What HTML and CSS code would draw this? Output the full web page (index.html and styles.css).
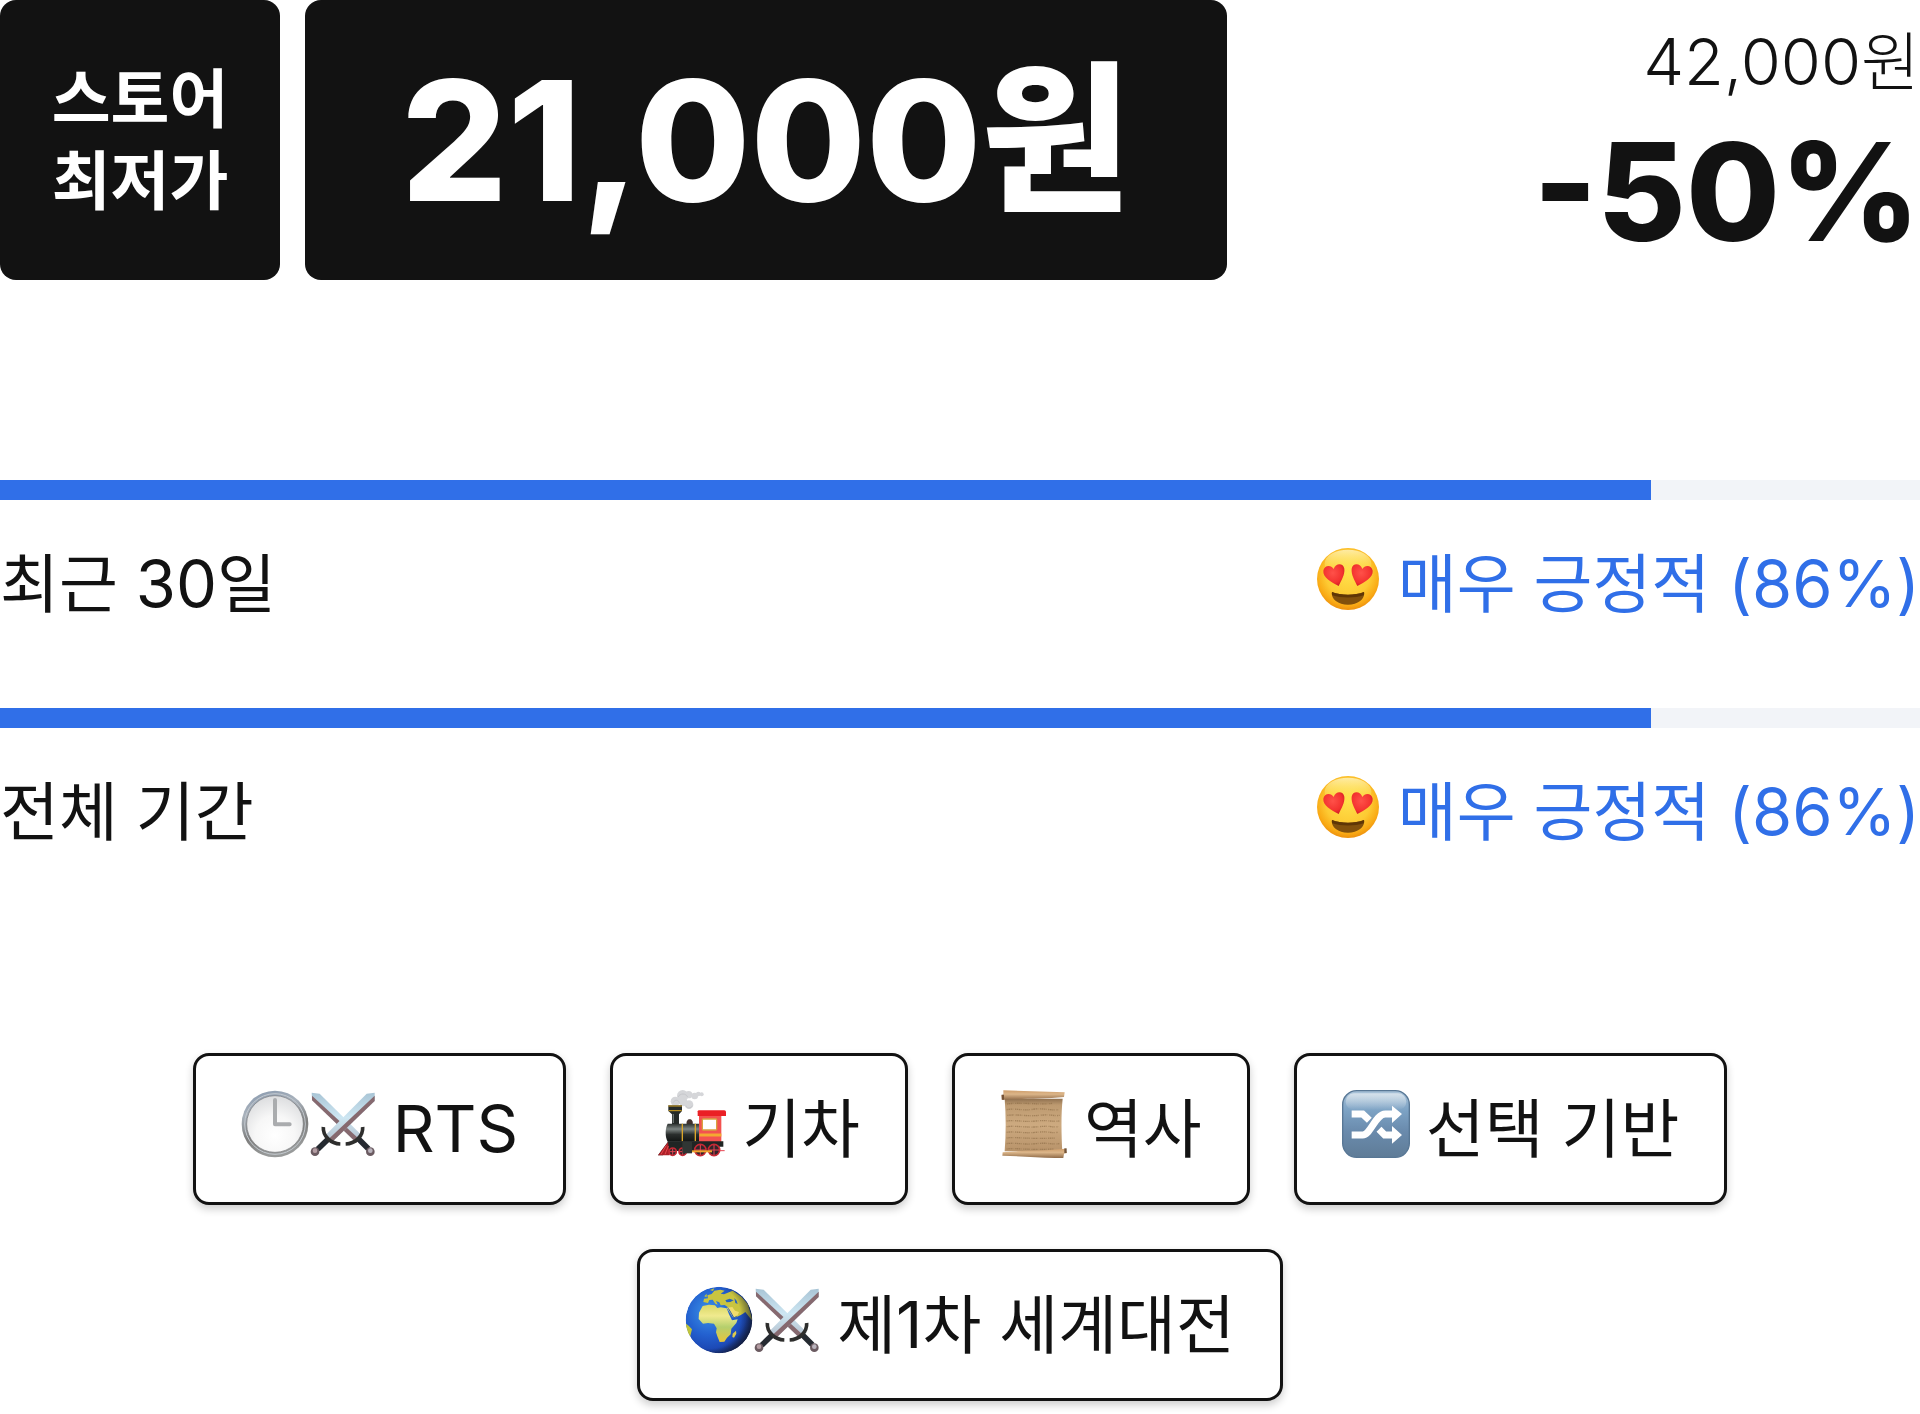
FILE: index.html
```html
<!DOCTYPE html>
<html lang="ko">

<head>
    <meta charset="UTF-8">
    <meta name="viewport" content="width=device-width, initial-scale=1.0">
    <title>스토어 최저가</title>
    <link rel="stylesheet" href="styles.css">
</head>

<body>
    <!-- shared icons -->
    <svg class="defs" width="0" height="0" aria-hidden="true">
        <defs>
            <radialGradient id="faceFill" cx="0.5" cy="0.42" r="0.6">
                <stop offset="0" stop-color="#ffe04a" />
                <stop offset="0.6" stop-color="#fdca33" />
                <stop offset="0.85" stop-color="#f9a914" />
                <stop offset="1" stop-color="#ea8a0c" />
            </radialGradient>
            <linearGradient id="faceShine" x1="0" y1="0" x2="0" y2="1">
                <stop offset="0" stop-color="#fffbd8" stop-opacity="0.7" />
                <stop offset="1" stop-color="#ffee3c" stop-opacity="0" />
            </linearGradient>
            <radialGradient id="heartFill" cx="0.45" cy="0.4" r="0.65">
                <stop offset="0" stop-color="#ff5149" />
                <stop offset="0.7" stop-color="#f3322f" />
                <stop offset="1" stop-color="#cf1b25" />
            </radialGradient>
            <linearGradient id="bladeFill" x1="0" y1="0" x2="0" y2="1">
                <stop offset="0" stop-color="#a9c5d6" />
                <stop offset="0.5" stop-color="#cde6f2" />
                <stop offset="1" stop-color="#b4bfcc" />
            </linearGradient>
            <symbol id="heartEyes" viewBox="26 30 204 204">
                <circle cx="128" cy="132" r="93" fill="url(#faceFill)" />
                <ellipse cx="128" cy="86" rx="70" ry="42" fill="url(#faceShine)" />
                <path d="M100 153C78 141 52 128 54 107C56 91 77 88 85 102C90 84 114 83 117 101C119 119 108 136 100 153Z" fill="url(#heartFill)" />
                <path d="M156 153C178 141 204 128 202 107C200 91 179 88 171 102C166 84 142 83 139 101C137 119 148 136 156 153Z" fill="url(#heartFill)" />
                <path d="M80 171C108 182 148 182 176 171C180 193 157 209 128 209C99 209 76 193 80 171Z" fill="#81500c" />
                <path d="M80 171C108 182 148 182 176 171C177 175 177 178 175 181C148 190 108 190 81 181C79 178 79 175 80 171Z" fill="#5f3606" />
            </symbol>
            <symbol id="swords" viewBox="382 149 204 204">
                <path d="M390 157L414 160L543 288L524 307L391 179Z" fill="url(#bladeFill)" />
                <path d="M391 166L533 297L524 307L391 180Z" fill="#86696f" />
                <path d="M530 295L560 325" stroke="#252a31" stroke-width="17" />
                <path d="M543 260C545 288 520 310 492 311" fill="none" stroke="#2e2e2d" stroke-width="11" />
                <path d="M579 157L555 160L429 287L449 307L579 182Z" fill="url(#bladeFill)" />
                <path d="M579 166L440 297L449 307L579 182Z" fill="#86696f" />
                <path d="M439 297L408 327" stroke="#252a31" stroke-width="17" />
                <path d="M425 260C423 288 448 310 476 311" fill="none" stroke="#2e2e2d" stroke-width="11" />
                <circle cx="400" cy="334" r="13" fill="#6b5b61" />
                <circle cx="400" cy="331" r="7" fill="#b49da3" />
                <circle cx="566" cy="334" r="13" fill="#6b5b61" />
                <circle cx="566" cy="331" r="7" fill="#b9b3bc" />
            </symbol>
        </defs>
    </svg>

    <section class="price">
        <div class="price-label">스토어<br>최저가</div>
        <div class="price-now"><span class="price-num">21,000</span>원</div>
        <div class="price-sale">
            <div class="price-before"><span class="num">42,000</span>원</div>
            <div class="price-rate">-50%</div>
        </div>
    </section>

    <section class="reviews">
        <div class="review">
            <div class="bar">
                <div class="bar-fill" style="width: 86%;"></div>
            </div>
            <div class="review-text">
                <span>최근 <span class="num">30</span>일</span>
                <span class="review-score">
                    <svg class="emoji" aria-hidden="true"><use href="#heartEyes" /></svg>
                    <span>매우 긍정적 <span class="num">(86%)</span></span>
                </span>
            </div>
        </div>
        <div class="review">
            <div class="bar">
                <div class="bar-fill" style="width: 86%;"></div>
            </div>
            <div class="review-text">
                <span>전체 기간</span>
                <span class="review-score">
                    <svg class="emoji" aria-hidden="true"><use href="#heartEyes" /></svg>
                    <span>매우 긍정적 <span class="num">(86%)</span></span>
                </span>
            </div>
        </div>
    </section>

    <section class="tags">
        <button class="tag" type="button">
            <span class="icons">
                <!-- clock -->
                <svg class="emoji" viewBox="178 149 204 204" aria-hidden="true">
                    <defs>
                        <linearGradient id="clockRim" x1="0" y1="0" x2="0.3" y2="1">
                            <stop offset="0" stop-color="#8496ad" />
                            <stop offset="0.35" stop-color="#a9b2bc" />
                            <stop offset="0.7" stop-color="#7e7e7d" />
                            <stop offset="1" stop-color="#989a9a" />
                        </linearGradient>
                        <radialGradient id="clockFace" cx="0.5" cy="0.7" r="0.7">
                            <stop offset="0" stop-color="#ffffff" />
                            <stop offset="0.5" stop-color="#f7f7f7" />
                            <stop offset="1" stop-color="#dcdddf" />
                        </radialGradient>
                    </defs>
                    <circle cx="280" cy="251" r="100" fill="url(#clockRim)" />
                    <circle cx="280" cy="251" r="91" fill="none" stroke="#c3c9cf" stroke-width="3" />
                    <circle cx="280" cy="251" r="85" fill="url(#clockFace)" stroke="#77797b" stroke-width="2" />
                    <path d="M280 179V252H324" fill="none" stroke="#aaacae" stroke-width="12" stroke-linecap="round" stroke-linejoin="round" />
                </svg>
                <svg class="emoji" aria-hidden="true"><use href="#swords" /></svg>
            </span>
            <span class="num">RTS</span>
        </button>
        <button class="tag" type="button">
            <!-- steam train -->
            <svg class="emoji" viewBox="172 149 204 204" aria-hidden="true">
                <defs>
                    <linearGradient id="boiler" x1="0" y1="0" x2="0" y2="1">
                        <stop offset="0" stop-color="#2b302e" />
                        <stop offset="0.3" stop-color="#7d8583" />
                        <stop offset="0.6" stop-color="#2a2e2d" />
                        <stop offset="1" stop-color="#111413" />
                    </linearGradient>
                </defs>
                <g fill="#d5d6d9">
                    <circle cx="224" cy="183" r="14" />
                    <circle cx="246" cy="166" r="17" />
                    <circle cx="264" cy="163" r="11" />
                    <circle cx="265" cy="193" r="13" />
                    <circle cx="248" cy="186" r="12" />
                    <circle cx="282" cy="167" r="10" />
                    <circle cx="293" cy="161" r="7" />
                    <circle cx="303" cy="162" r="6" />
                </g>
                <path d="M232 170C238 158 256 158 261 170M217 187C224 176 234 178 237 190M256 196C260 206 271 204 275 196" fill="none" stroke="#c6c7cb" stroke-width="3" />
                <path d="M203 195H244V212L235 222V252H214V222L203 212Z" fill="#252a28" />
                <path d="M203 197H244M204 211H243" stroke="#d5a321" stroke-width="3" />
                <path d="M218 221V248" stroke="#6d7472" stroke-width="4" />
                <path d="M258 252C256 243 261 237 267 237C273 237 278 243 276 252Z" fill="#43312d" />
                <path d="M201 250H298V304H201C193 290 193 264 201 250Z" fill="url(#boiler)" />
                <path d="M245 250V303M284 250V303" stroke="#dca72b" stroke-width="4" />
                <rect x="295" y="223" width="67" height="82" fill="#f35250" />
                <path d="M291 213Q291 210 296 210H371Q376 210 376 215V227H291Z" fill="#ea2025" />
                <path d="M296 284H362" stroke="#f3a931" stroke-width="9" />
                <rect x="305" y="236" width="43" height="33" rx="3" fill="#fff" stroke="#d8a340" stroke-width="4" />
                <path d="M203 303H368V319H351L340 332H198L187 345H172Z" fill="#202524" />
                <path d="M202 305L172 345H207Z" fill="#ab2027" />
                <path d="M197 315L181 342M203 317L193 342" stroke="#e7464c" stroke-width="3" />
                <g fill="#33252a" stroke="#c82834" stroke-width="5">
                    <circle cx="216" cy="334" r="11" />
                    <circle cx="246" cy="334" r="11" />
                    <circle cx="299" cy="329" r="17" />
                    <circle cx="340" cy="329" r="17" />
                </g>
                <path d="M216 325V343M207 334H225M246 325V343M237 334H255M299 314V344M284 329H314M340 314V344M325 329H355M357 331H372" stroke="#e54552" stroke-width="3" />
                <rect x="245" y="305" width="29" height="34" fill="#303634" />
                <path d="M274 333H334" stroke="#f0a62d" stroke-width="6" />
            </svg>
            <span>기차</span>
        </button>
        <button class="tag" type="button">
            <!-- scroll -->
            <svg class="emoji" viewBox="182 149 204 204" aria-hidden="true">
                <defs>
                    <linearGradient id="paper" x1="0" y1="0" x2="0" y2="1">
                        <stop offset="0" stop-color="#8f704f" />
                        <stop offset="0.12" stop-color="#bd9a70" />
                        <stop offset="0.5" stop-color="#cdaa80" />
                        <stop offset="1" stop-color="#b8936a" />
                    </linearGradient>
                    <linearGradient id="roll" x1="0" y1="0" x2="0" y2="1">
                        <stop offset="0" stop-color="#cf9e6b" />
                        <stop offset="0.4" stop-color="#dbb589" />
                        <stop offset="1" stop-color="#8f6a48" />
                    </linearGradient>
                </defs>
                <path d="M196 175H370C365 220 366 285 369 333H196C200 280 200 225 196 175Z" fill="url(#paper)" />
                <path d="M203 191C240 185 300 194 340 189M202 208C230 203 250 212 280 207S330 211 357 208M204 225C240 221 260 229 300 225S340 228 361 225M202 242C230 238 250 246 290 242S330 245 360 242M202 259C230 255 260 263 300 259S330 262 357 259M202 276C230 272 250 280 290 276S330 279 355 276M202 293C230 289 260 297 350 293M202 310C230 306 250 314 290 310S330 313 360 310M202 326C230 322 260 330 342 326" fill="none" stroke="#8c6c46" stroke-opacity="0.6" stroke-width="4" stroke-dasharray="3 2 5 2 4 2 2 5" />
                <path d="M192 150L376 156L374 170C310 177 240 174 189 179L186 164H192Z" fill="url(#roll)" />
                <path d="M187 163H194V178H187Z" fill="#765337" />
                <path d="M190 336C240 330 310 332 378 325L383 338L374 340L372 353C310 354 250 347 189 346Z" fill="url(#roll)" />
                <path d="M375 324H382V338H375Z" fill="#72543a" />
            </svg>
            <span>역사</span>
        </button>
        <button class="tag" type="button">
            <!-- shuffle -->
            <svg class="emoji" viewBox="190 149 204 204" aria-hidden="true">
                <defs>
                    <linearGradient id="tile" x1="0" y1="0" x2="0" y2="1">
                        <stop offset="0" stop-color="#a9c2d8" />
                        <stop offset="0.3" stop-color="#7ca2c4" />
                        <stop offset="0.6" stop-color="#6a8bad" />
                        <stop offset="1" stop-color="#5f7c97" />
                    </linearGradient>
                    <linearGradient id="tileShine" x1="0" y1="0" x2="0" y2="1">
                        <stop offset="0" stop-color="#e3ebf1" stop-opacity="0.8" />
                        <stop offset="1" stop-color="#e3ebf1" stop-opacity="0" />
                    </linearGradient>
                </defs>
                <rect x="192" y="151" width="200" height="200" rx="42" fill="url(#tile)" stroke="#587795" stroke-width="4" />
                <rect x="201" y="159" width="182" height="50" rx="25" fill="url(#tileShine)" />
                <path d="M219 221H252L272 240M219 284H252C276 284 290 221 320 221H344M301 267L318 284H344" fill="none" stroke="#fff" stroke-width="21" />
                <path d="M340 196L370 221L340 248ZM340 257L370 284L340 310Z" fill="#fff" />
            </svg>
            <span>선택 기반</span>
        </button>
        <button class="tag" type="button">
            <span class="icons">
                <!-- globe -->
                <svg class="emoji" viewBox="0 0 204 204" aria-hidden="true">
                    <defs>
                        <radialGradient id="ocean" cx="0.35" cy="0.38" r="0.7">
                            <stop offset="0" stop-color="#3b93e8" />
                            <stop offset="0.5" stop-color="#2360cf" />
                            <stop offset="0.8" stop-color="#1c48b4" />
                            <stop offset="1" stop-color="#162255" />
                        </radialGradient>
                        <linearGradient id="land" x1="0" y1="0" x2="0" y2="1">
                            <stop offset="0" stop-color="#d9d766" />
                            <stop offset="0.3" stop-color="#f0ea8e" />
                            <stop offset="0.6" stop-color="#b5cf6d" />
                            <stop offset="1" stop-color="#e7c43c" />
                        </linearGradient>
                        <radialGradient id="globeShade" cx="0.35" cy="0.45" r="0.68">
                            <stop offset="0.7" stop-color="#101a30" stop-opacity="0" />
                            <stop offset="1" stop-color="#101a30" stop-opacity="0.75" />
                        </radialGradient>
                        <clipPath id="globeClip"><circle cx="102" cy="102" r="100" /></clipPath>
                    </defs>
                    <g clip-path="url(#globeClip)">
                        <circle cx="102" cy="102" r="100" fill="url(#ocean)" />
                        <path d="M53 60L72 56L90 58L97 66L107 64L125 67L132 85L141 103L158 100L154 111L139 128L137 145L126 155L118 167L104 168L97 151L93 139L95 127L87 113L69 111L54 113L41 99L42 80Z" fill="url(#land)" />
                        <path d="M143 143L153 134L154 143L147 155L142 153Z" fill="#dfca4b" />
                        <path d="M55 48L57 38L69 37L67 28L80 24L88 14L106 11L119 14L107 23L117 25L143 14L169 32L188 54L198 86L202 104L191 91L181 78L174 83L166 88L150 95L139 81L129 64L119 57L107 58L103 49L93 45L98 56L91 53L83 41L73 42L69 51Z" fill="#c9c43f" />
                        <path d="M125 65L142 63L150 74L162 78L158 88L145 96Z" fill="#f0dc6c" />
                        <path d="M121 43L134 38L146 43L136 48L125 49ZM148 36L155 44L158 54L151 51Z" fill="#2863bd" />
                        <path d="M130 67L147 96L155 91" fill="none" stroke="#295ba9" stroke-width="3" />
                        <path d="M58 31L65 23L65 34ZM75 12L88 7L84 15ZM0 111L11 119L21 130L16 149L9 164L0 150Z" fill="#bfc43a" />
                        <circle cx="102" cy="102" r="100" fill="url(#globeShade)" />
                    </g>
                </svg>
                <svg class="emoji" aria-hidden="true"><use href="#swords" /></svg>
            </span>
            <span>제<span class="num">1</span>차 세계대전</span>
        </button>
    </section>
</body>

</html>
```
FILE: styles.css
```css
* {
    box-sizing: border-box;
}

body {
    margin: 0;
    background-color: #fff;
    color: #121212;
    font-family: Inter, "Noto Sans CJK KR", sans-serif;
    font-size: 64px;
    line-height: 84px;
}

.defs {
    position: absolute;
}

/* latin letters and digits run a little larger than hangul */
.num {
    font-size: 65px;
}

.emoji {
    display: block;
    flex: none;
    width: 68px;
    height: 68px;
    margin-top: 3px;
}

.price {
    display: flex;
    gap: 25px;
    margin-bottom: 200px;
}

.price-label,
.price-now {
    display: flex;
    align-items: center;
    justify-content: center;
    height: 280px;
    border-radius: 16px;
    background-color: #121212;
    color: #fff;
}

.price-label {
    width: 280px;
    line-height: 82px;
    font-weight: 700;
}

.price-now {
    padding: 0 96px;
    font-size: 162px;
    font-weight: 800;
    line-height: 200px;
}

.price-num {
    font-size: 167px;
}

.price-sale {
    display: flex;
    flex-direction: column;
    gap: 8px;
    margin-left: auto;
    padding-top: 20px;
    text-align: right;
}

.price-before {
    font-weight: 300;
}

.price-rate {
    font-size: 136px;
    font-weight: 800;
    line-height: 160px;
}

.reviews {
    display: flex;
    flex-direction: column;
    gap: 82px;
    margin-bottom: 199px;
}

.bar {
    height: 20px;
    margin-bottom: 42px;
    background-color: #f2f4f8;
}

.bar-fill {
    height: 100%;
    background-color: #306fe8;
}

.review-text {
    display: flex;
    justify-content: space-between;
}

.review-score {
    display: flex;
    gap: 16px;
    color: #306fe8;
}

.tags {
    display: flex;
    flex-wrap: wrap;
    justify-content: center;
    gap: 44px;
    padding: 0 150px 13px;
}

.tag {
    display: flex;
    align-items: flex-start;
    gap: 16px;
    padding: 31px 45px;
    border: 3px solid #121212;
    border-radius: 16px;
    background-color: #fff;
    box-shadow: 0 4px 8px rgba(0, 0, 0, 0.2);
    color: inherit;
    font: inherit;
    cursor: pointer;
}

.icons {
    display: flex;
}
```
